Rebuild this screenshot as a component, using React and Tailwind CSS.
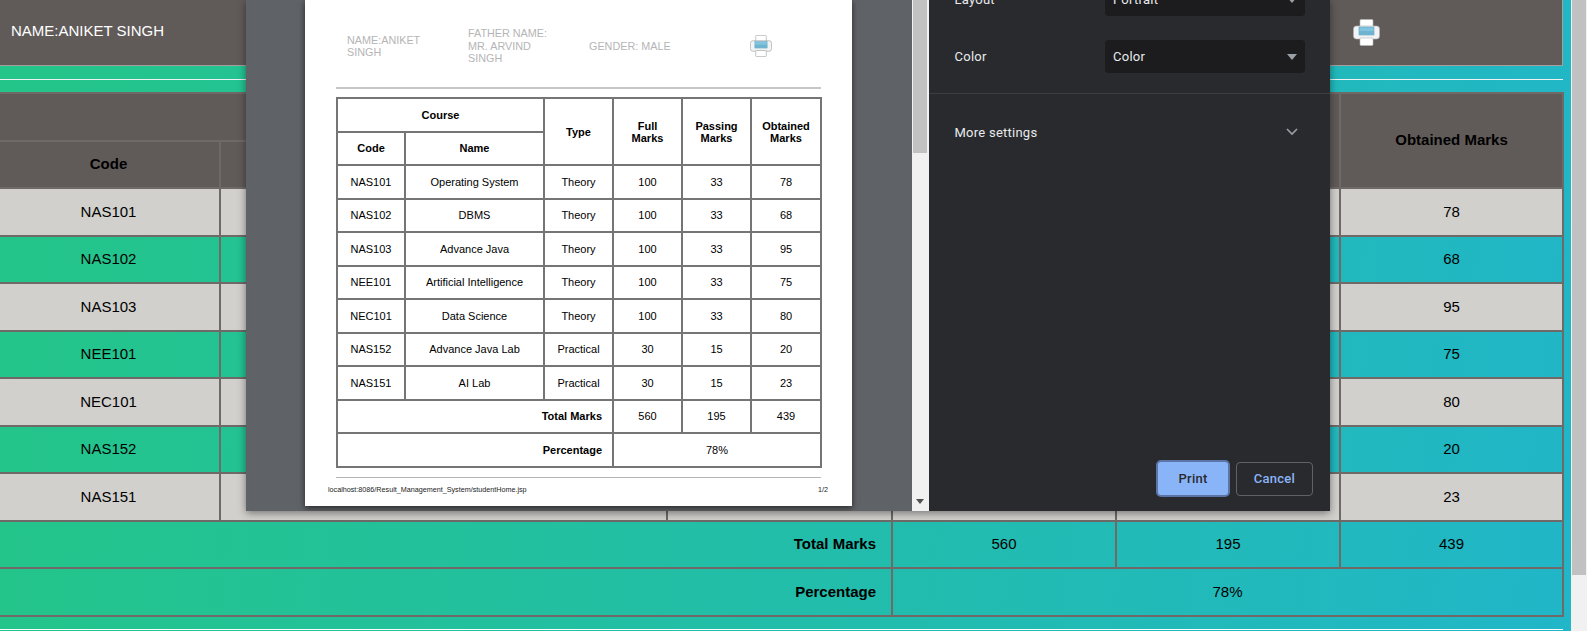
const ROWS = [
  ["NAS101", "Operating System", "Theory", 100, 33, 78],
  ["NAS102", "DBMS", "Theory", 100, 33, 68],
  ["NAS103", "Advance Java", "Theory", 100, 33, 95],
  ["NEE101", "Artificial Intelligence", "Theory", 100, 33, 75],
  ["NEC101", "Data Science", "Theory", 100, 33, 80],
  ["NAS152", "Advance Java Lab", "Practical", 30, 15, 20],
  ["NAS151", "AI Lab", "Practical", 30, 15, 23],
];

const OUTER_CELL = "border-2 border-[#6f6a68] text-center";
const PAGE_CELL = "border-2 border-[#757575] text-center";

function PrinterIcon({ className, edge }) {
  return (
    <svg viewBox="0 0 27 27" className={className}>
      <rect x="7" y="0.5" width="13" height="8" rx="1" fill="#fff" stroke={edge} strokeWidth="0.6" />
      <rect x="0.5" y="7" width="26" height="13" rx="3" fill="#f1f3f4" stroke={edge} strokeWidth="0.6" />
      <rect x="6" y="8" width="15" height="8" fill="#80c4de" stroke="#5ea6c4" strokeWidth="0.6" />
      <rect x="6" y="12" width="15" height="4" fill="#6fb3d0" />
      <rect x="7" y="19" width="13" height="7.5" rx="1" fill="#fff" stroke={edge} strokeWidth="0.6" />
    </svg>
  );
}

function OuterTable() {
  return (
    <table className="-ml-1 w-[1566px] table-fixed border-collapse text-[15px] text-black">
      <colgroup>
        <col className="w-[223px]" />
        <col className="w-[447px]" />
        <col className="w-[225px]" />
        <col className="w-[224px]" />
        <col className="w-[224px]" />
        <col className="w-[223px]" />
      </colgroup>
      <thead className="bg-[#605b59] font-bold">
        <tr className="h-[48px]">
          <th colSpan={2} className={OUTER_CELL}>Course</th>
          <th rowSpan={2} className={OUTER_CELL}>Type</th>
          <th rowSpan={2} className={OUTER_CELL}>Full Marks</th>
          <th rowSpan={2} className={OUTER_CELL}>Passing Marks</th>
          <th rowSpan={2} className={OUTER_CELL}>Obtained Marks</th>
        </tr>
        <tr className="h-[47px]">
          <th className={OUTER_CELL}>Code</th>
          <th className={OUTER_CELL}>Name</th>
        </tr>
      </thead>
      <tbody>
        {ROWS.map((r, i) => (
          <tr key={r[0]} className={`h-[47.5px] ${i % 2 === 0 ? "bg-[#d2d0cd]" : ""}`}>
            {r.map((v, j) => (
              <td key={j} className={OUTER_CELL}>{v}</td>
            ))}
          </tr>
        ))}
        <tr className="h-[47.5px]">
          <td colSpan={3} className={`${OUTER_CELL} !text-right pr-[15px] font-bold`}>Total Marks</td>
          <td className={OUTER_CELL}>560</td>
          <td className={OUTER_CELL}>195</td>
          <td className={OUTER_CELL}>439</td>
        </tr>
        <tr className="h-[47.5px]">
          <td colSpan={3} className={`${OUTER_CELL} !text-right pr-[15px] font-bold`}>Percentage</td>
          <td colSpan={3} className={OUTER_CELL}>78%</td>
        </tr>
      </tbody>
    </table>
  );
}

function PageTable() {
  return (
    <table className="w-[484px] table-fixed border-collapse text-[11px] leading-[12px] text-black">
      <colgroup>
        <col className="w-[68px]" />
        <col className="w-[139px]" />
        <col className="w-[69px]" />
        <col className="w-[69px]" />
        <col className="w-[69px]" />
        <col className="w-[70px]" />
      </colgroup>
      <thead className="font-bold">
        <tr className="h-[33.5px]">
          <th colSpan={2} className={PAGE_CELL}>Course</th>
          <th rowSpan={2} className={PAGE_CELL}>Type</th>
          <th rowSpan={2} className={PAGE_CELL}>Full<br />Marks</th>
          <th rowSpan={2} className={PAGE_CELL}>Passing<br />Marks</th>
          <th rowSpan={2} className={PAGE_CELL}>Obtained<br />Marks</th>
        </tr>
        <tr className="h-[33.5px]">
          <th className={PAGE_CELL}>Code</th>
          <th className={PAGE_CELL}>Name</th>
        </tr>
      </thead>
      <tbody>
        {ROWS.map((r) => (
          <tr key={r[0]} className="h-[33.5px]">
            {r.map((v, j) => (
              <td key={j} className={PAGE_CELL}>{v}</td>
            ))}
          </tr>
        ))}
        <tr className="h-[33.5px]">
          <td colSpan={3} className={`${PAGE_CELL} !text-right pr-[10px] font-bold`}>Total Marks</td>
          <td className={PAGE_CELL}>560</td>
          <td className={PAGE_CELL}>195</td>
          <td className={PAGE_CELL}>439</td>
        </tr>
        <tr className="h-[33.5px]">
          <td colSpan={3} className={`${PAGE_CELL} !text-right pr-[10px] font-bold`}>Percentage</td>
          <td colSpan={3} className={PAGE_CELL}>78%</td>
        </tr>
      </tbody>
    </table>
  );
}

function PrintPage() {
  return (
    <div className="ml-[59px] h-[506px] w-[547px] bg-white shadow-[0_2px_6px_rgba(0,0,0,0.6)]">
      <div className="flex h-[87px] items-center pl-[42px] pt-[5px] text-[10.8px] leading-[12.4px] text-[#b5b5b5]">
        <div className="w-[121px] pr-[30px]">NAME:ANIKET SINGH</div>
        <div className="w-[121px] pr-[30px]">FATHER NAME: MR. ARVIND SINGH</div>
        <div className="w-[161px]">GENDER: MALE</div>
        <PrinterIcon className="h-[22px] w-[22px]" edge="#8a8a8a" />
      </div>
      <div className="ml-[31px] flex w-[485px] flex-col">
        <div className="h-[2px] bg-[#c6c6c6]" />
        <div className="mt-[8px]">
          <PageTable />
        </div>
        <div className="mt-[9px] h-px bg-[#b4b4b4]" />
      </div>
      <div className="ml-[23px] mt-[7px] flex w-[500px] justify-between text-[7.2px] leading-[9px] text-[#222]">
        <span>localhost:8086/Result_Management_System/studentHome.jsp</span>
        <span>1/2</span>
      </div>
    </div>
  );
}

function Select({ label }) {
  return (
    <div className="flex h-[33px] w-[200px] items-center justify-between rounded bg-[#1c1c1e] pl-2 pr-[8px]">
      <span>{label}</span>
      <svg viewBox="0 0 10 6" className="h-[6px] w-[10px]">
        <path d="M0 0h10L5 6z" fill="#9aa0a6" />
      </svg>
    </div>
  );
}

function PrintDialog() {
  return (
    <div className="absolute left-[246px] top-0 flex h-[511px] w-[1084px] shadow-[0_2px_8px_rgba(0,0,0,0.45)]">
      <div className="w-[666px] overflow-hidden bg-[#5f6266]">
        <PrintPage />
      </div>
      <div className="relative w-[17px] bg-[#f1f1f1] pl-[1px]">
        <div className="h-[153px] w-[14px] bg-[#c1c1c1]" />
        <svg viewBox="0 0 8 5" className="absolute bottom-[7px] left-[4px] h-[5px] w-[8px]">
          <path d="M0 0h8L4 5z" fill="#505050" />
        </svg>
      </div>
      <div className="flex w-[401px] flex-col bg-[#292a2d] font-[Roboto] text-[13px] tracking-[0.25px] text-[#e8eaed]">
        <div className="-mt-[17px] flex flex-col gap-[24px] pl-[25.5px]">
          <div className="flex items-center">
            <span className="w-[150.5px]">Layout</span>
            <Select label="Portrait" />
          </div>
          <div className="flex items-center">
            <span className="w-[150.5px]">Color</span>
            <Select label="Color" />
          </div>
        </div>
        <div className="mt-[20px] flex h-[79px] items-center justify-between border-t border-[#3c3d40] pl-[25.5px] pr-[32px]">
          <span>More settings</span>
          <svg viewBox="0 0 12 8" className="-mt-[3px] h-[8px] w-[12px]" fill="none" stroke="#9aa0a6" strokeWidth="1.6">
            <path d="M1 1l5 5 5-5" />
          </svg>
        </div>
        <div className="mt-auto flex items-center justify-end gap-[6px] pb-[14px] pr-[17px] font-medium">
          <button className="h-[37px] w-[74px] rounded-[5px] border-2 border-[#5b76a6] bg-[#8ab4f8] text-[#292a2d]">Print</button>
          <button className="h-[34px] w-[77px] rounded border border-[#5f6368] text-[#8ab4f8]">Cancel</button>
        </div>
      </div>
    </div>
  );
}

export default function App() {
  return (
    <div className="relative flex h-[631px] overflow-hidden bg-white font-['Liberation_Sans',sans-serif]">
      <div className="w-[1571px] shrink-0 overflow-hidden bg-[linear-gradient(97deg,#24c588,#21b6c8)] pr-[8px]">
        <div className="flex h-[66px] items-center border-b border-r border-[#a5a09e] bg-[#605b59] pl-[11px] text-[15px] text-white">
          <span className="-mt-[2px] w-[1342px]">NAME:ANIKET SINGH</span>
          <PrinterIcon className="h-[27px] w-[27px]" edge="#b5b5b5" />
        </div>
        <div className="h-[26px] pt-[13px]">
          <div className="h-px bg-[#eef2f2]" />
        </div>
        <OuterTable />
        <div className="mt-[12px] h-px bg-white" />
      </div>
      <div className="w-[16px] shrink-0 bg-[#f1f1f1] pl-[1px]">
        <div className="h-[575px] w-[14px] bg-[#c1c1c1]" />
      </div>
      <PrintDialog />
    </div>
  );
}
